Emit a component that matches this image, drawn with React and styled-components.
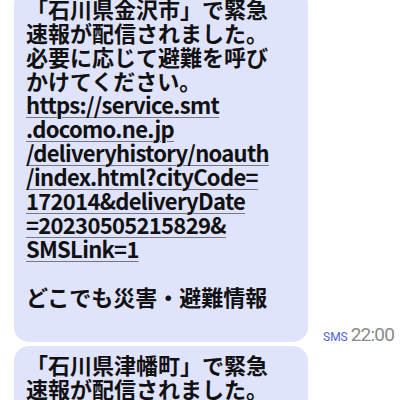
import styled, { createGlobalStyle } from 'styled-components'

const GlobalStyle = createGlobalStyle`
  html, body {
    margin: 0;
    padding: 0;
    background: #ffffff;
  }
`

const messages = [
  {
    id: 1,
    text: ['「石川県金沢市」で緊急', '速報が配信されました。', '必要に応じて避難を呼び', 'かけてください。'],
    link: [
      'https://service.smt',
      '.docomo.ne.jp',
      '/deliveryhistory/noauth',
      '/index.html?cityCode=',
      '172014&deliveryDate',
      '=20230505215829&',
      'SMSLink=1',
    ],
    footer: 'どこでも災害・避難情報',
    time: '22:00',
  },
  {
    id: 2,
    text: ['「石川県津幡町」で緊急', '速報が配信されました。', '必要に応じて避難を呼び', 'かけてください。'],
  },
]

const Viewport = styled.div`
  width: 400px;
  height: 400px;
  overflow: hidden;
  background: #ffffff;
`

const Thread = styled.div`
  display: flex;
  flex-direction: column;
  gap: 4px;
  padding-left: 14px;
  /* list is scrolled, first bubble starts above the view */
  margin-top: -10px;
`

const Row = styled.div`
  display: flex;
  align-items: flex-end;
  gap: 15px;
`

const Bubble = styled.div`
  width: 294px;
  box-sizing: border-box;
  padding: 6px 12px ${(p) => (p.$tall ? '34px' : '6px')};
  background: #dfe3fb;
  border-radius: 15px;
  font-family: 'Noto Sans CJK JP', 'Noto Sans', sans-serif;
  font-weight: 700;
  font-size: 22px;
  line-height: 24px;
  color: #111111;
`

const Line = styled.div`
  white-space: nowrap;
  min-height: 24px;
`

const LinkLine = styled(Line)`
  letter-spacing: -0.7px;
  span {
    text-decoration: underline;
    text-decoration-color: #777780;
    text-decoration-thickness: 1px;
    text-underline-offset: 3px;
  }
`

const Meta = styled.div`
  display: flex;
  align-items: baseline;
  gap: 3px;
  margin-bottom: -4px;
  font-family: Roboto, 'Liberation Sans', sans-serif;
`

const Channel = styled.span`
  font-size: 12px;
  color: #4e63d6;
`

const Time = styled.span`
  font-size: 19px;
  color: #8a8a8a;
  letter-spacing: -0.8px;
`

const App = () => {
  return (
    <Viewport>
      <GlobalStyle />
      <Thread>
        {messages.map((m) => (
          <Row key={m.id}>
            <Bubble $tall={!!m.footer}>
              {m.text.map((t) => (
                <Line key={t}>{t}</Line>
              ))}
              {m.link &&
                m.link.map((l) => (
                  <LinkLine key={l}>
                    <span>{l}</span>
                  </LinkLine>
                ))}
              {m.footer && (
                <>
                  <Line />
                  <Line>{m.footer}</Line>
                </>
              )}
            </Bubble>
            {m.time && (
              <Meta>
                <Channel>SMS</Channel>
                <Time>{m.time}</Time>
              </Meta>
            )}
          </Row>
        ))}
      </Thread>
    </Viewport>
  )
}

export default App
